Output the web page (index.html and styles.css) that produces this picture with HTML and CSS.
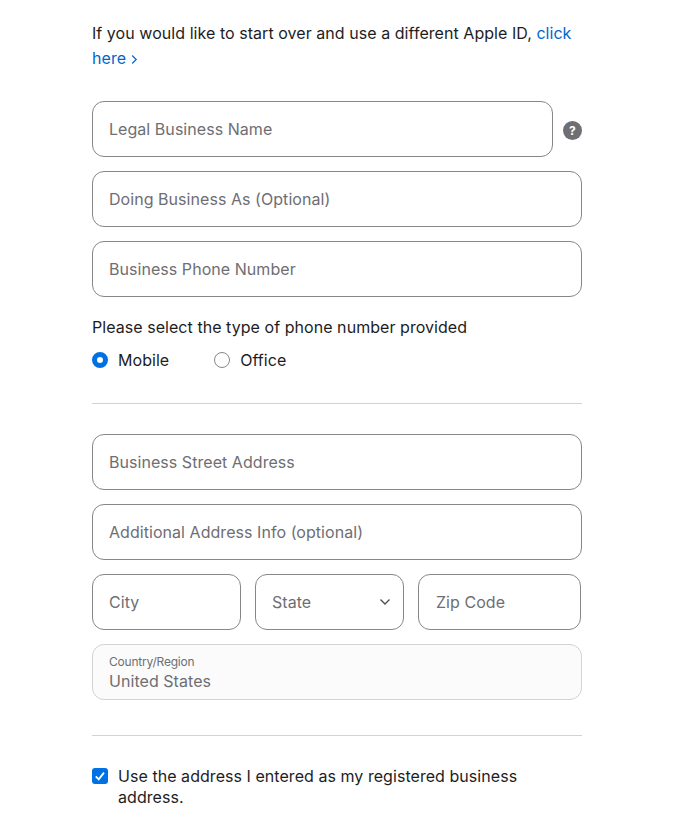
FILE: index.html
```html
<!DOCTYPE html>
<html lang="en">
<head>
<meta charset="utf-8">
<title>Business details</title>
<link rel="stylesheet" href="styles.css">
</head>
<body>
<main class="form">
  <p class="intro">If you would like to start over and use a different Apple ID, <a href="#" class="link">click here <svg class="link-chevron" width="7" height="11" viewBox="0 0 7 11"><path d="M1.2 1.5 5.2 5.5 1.2 9.5" fill="none" stroke="currentColor" stroke-width="1.2"/></svg></a></p>

  <div class="stack">
    <div class="row-help">
      <div class="field grow"><span class="ph">Legal Business Name</span></div>
      <svg class="help" width="19" height="19" viewBox="0 0 19 19"><circle cx="9.5" cy="9.5" r="9.5" fill="#6e6e73"/><text x="9.5" y="14" text-anchor="middle" class="help-mark">?</text></svg>
    </div>
    <div class="field"><span class="ph">Doing Business As (Optional)</span></div>
    <div class="field"><span class="ph">Business Phone Number</span></div>
  </div>

  <p class="question">Please select the type of phone number provided</p>
  <div class="radios">
    <label class="choice"><span class="radio on"></span>Mobile</label>
    <label class="choice"><span class="radio"></span>Office</label>
  </div>

  <hr class="rule rule-a">

  <div class="stack">
    <div class="field"><span class="ph">Business Street Address</span></div>
    <div class="field"><span class="ph">Additional Address Info (optional)</span></div>
    <div class="city-row">
      <div class="field"><span class="ph">City</span></div>
      <div class="field select"><span class="ph">State</span>
        <svg class="select-chevron" width="12" height="8" viewBox="0 0 12 8"><path d="M1.5 1.5 6 6 10.5 1.5" fill="none" stroke="#515154" stroke-width="1.4"/></svg>
      </div>
      <div class="field zip"><span class="ph">Zip Code</span></div>
    </div>
    <div class="field readonly">
      <span class="small-label">Country/Region</span>
      <span class="ph">United States</span>
    </div>
  </div>

  <hr class="rule rule-b">

  <label class="check-row">
    <span class="check"><svg width="16" height="16" viewBox="0 0 16 16"><path d="M3.8 8.4 6.7 11.4 12 4.6" fill="none" stroke="#fff" stroke-width="1.8"/></svg></span>
    <span>Use the address I entered as my registered business address.</span>
  </label>
</main>
</body>
</html>
```
FILE: styles.css
```css
* { box-sizing: border-box; }
html, body { margin: 0; padding: 0; background: #fff; }
body {
  font-family: Inter, "Liberation Sans", sans-serif;
  font-size: 16px;
  letter-spacing: 0.05px;
  color: #1d1d1f;
  height: 834px;
  overflow: hidden;
}
.form { width: 490px; margin-left: 92px; padding-top: 21px; }
.intro { margin: 0 0 30px; line-height: 25px; }
.link { color: #0066cc; text-decoration: none; }
.link-chevron { display: inline-block; vertical-align: -1px; }
.stack { display: flex; flex-direction: column; gap: 14px; }
.row-help { display: flex; align-items: center; gap: 10px; }
.grow { flex: 1; }
.field {
  height: 56px;
  border: 1px solid #86868b;
  border-radius: 12px;
  padding: 0 16px;
  display: flex;
  align-items: center;
  background: #fff;
}
.ph { color: #6e6e73; line-height: 20px; }
.help { flex: none; margin-top: 3px; }
.help-mark { font-family: Inter, sans-serif; font-size: 12px; font-weight: 700; fill: #fff; }
.question { margin: 20px 0 0; line-height: 20px; }
.radios { display: flex; gap: 45px; margin-top: 13px; height: 20px; }
.choice { display: flex; align-items: center; gap: 10px; }
.radio { width: 16px; height: 16px; border-radius: 50%; border: 1px solid #86868b; background: #fff; }
.radio.on { border: 5.5px solid #0071e3; }
.rule { border: 0; height: 1px; background: #d2d2d7; margin: 0; }
.rule-a { margin-top: 33px; margin-bottom: 30px; }
.rule-b { margin-top: 35px; margin-bottom: 30px; }
.city-row { display: grid; grid-template-columns: 149px 149px 163px; gap: 14px; }
.select { justify-content: space-between; padding-right: 12px; }
.zip { padding-left: 17px; }
.readonly {
  background: #fbfbfb;
  border-color: #d2d2d7;
  flex-direction: column;
  align-items: flex-start;
  justify-content: flex-start;
  padding-top: 9px;
}
.readonly .ph { margin-top: 1px; }
.small-label { font-size: 12px; letter-spacing: -0.2px; line-height: 16px; color: #6e6e73; }
.check-row { display: flex; gap: 10px; line-height: 21px; }
.check { flex: none; width: 16px; height: 16px; margin-top: 2px; border-radius: 3px; background: #0071e3; display: flex; }
```
